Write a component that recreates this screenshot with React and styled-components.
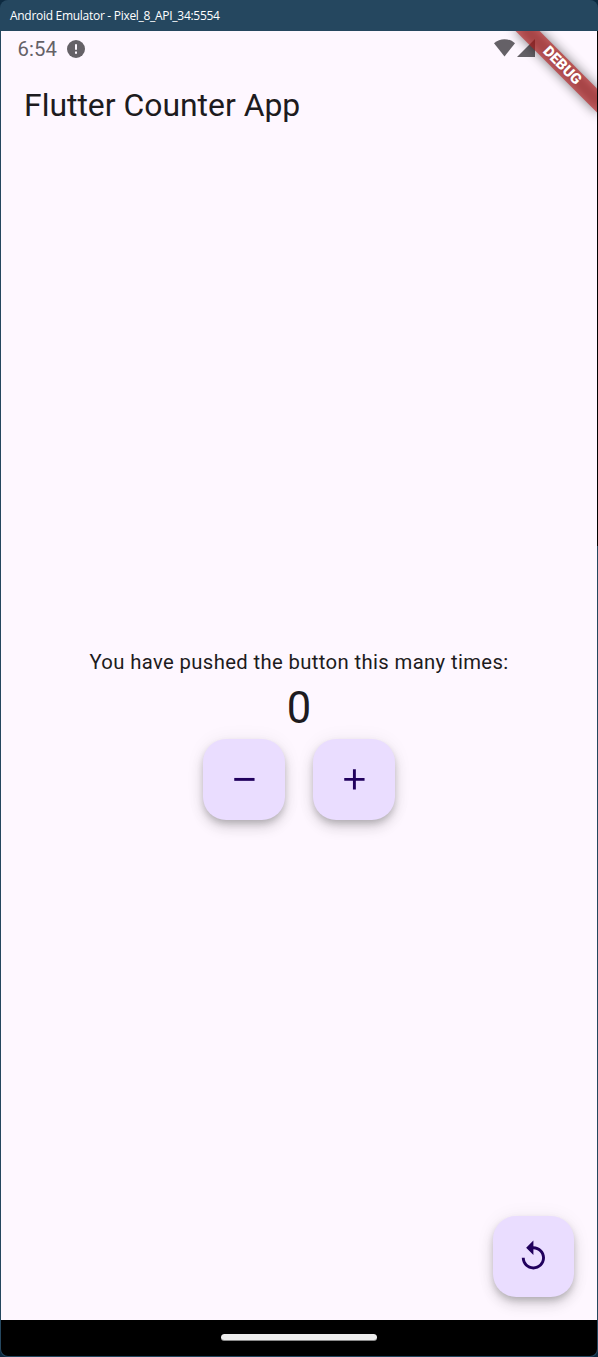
import React, { useState } from 'react';
import styled, { createGlobalStyle } from 'styled-components';
import { MdAdd, MdRemove, MdReplay } from 'react-icons/md';

const GlobalStyle = createGlobalStyle`
  * { box-sizing: border-box; }
  body { margin: 0; background: #0d2a40; font-family: Roboto, sans-serif; }
`;

const EmulatorWindow = styled.div`
  width: 598px;
  height: 1357px;
  display: flex;
  flex-direction: column;
  overflow: hidden;
  border-radius: 8px;
  background: #25475f;
`;

const TitleBar = styled.header`
  height: 31px;
  flex: none;
  padding-left: 10px;
  color: #fff;
  font: 12px/31px 'Open Sans', 'Noto Sans', sans-serif;
  letter-spacing: -0.29px;
  white-space: nowrap;
`;

const Device = styled.div`
  flex: 1;
  display: flex;
  flex-direction: column;
  margin: 0 0 1px;
  padding: 0 1px;
  min-height: 0;
  background: linear-gradient(#000 0 515px, #25475f 515px) right top / 1px 100% no-repeat;
`;

const Screen = styled.main`
  position: relative;
  flex: 1;
  display: flex;
  flex-direction: column;
  overflow: hidden;
  background: #fef7ff;
  color: #1d1b20;
`;

const StatusBar = styled.div`
  height: 35px;
  flex: none;
  display: flex;
  align-items: center;
  padding: 0 62px 0 16.6px;
  color: #656167;
`;

const Clock = styled.span`
  font-size: 20.3px;
  line-height: 35px;
  padding-top: 2px;
  letter-spacing: 0.1px;
  margin-right: 9.4px;
`;

const StatusIcons = styled.div`
  margin: 0 0 1px auto;
  display: flex;
  gap: 2.4px;
`;

const AppTitle = styled.h1`
  margin: 17px 0 0 23px;
  font-size: 31.9px;
  line-height: 44px;
  font-weight: 400;
`;

const Counter = styled.section`
  margin-top: 520px;
  display: flex;
  flex-direction: column;
  align-items: center;
`;

const Label = styled.p`
  margin: 0;
  font-size: 20.3px;
  line-height: 30px;
  letter-spacing: 0.36px;
`;

const Count = styled.output`
  font-size: 43.5px;
  line-height: 60px;
  padding-top: 2px;
`;

const ButtonRow = styled.div`
  display: flex;
  gap: 28.6px;
`;

const Fab = styled.button`
  width: 81.4px;
  height: 81.4px;
  margin-top: -0.4px;
  padding: 0;
  border: 0;
  border-radius: 23.2px;
  display: grid;
  place-items: center;
  background: #eaddff;
  color: #21005d;
  font-size: 34.8px;
  box-shadow: 0 4px 7px -1px rgba(0, 0, 0, 0.2), 0 8px 14px rgba(0, 0, 0, 0.12),
    0 1px 20px rgba(0, 0, 0, 0.06);
`;

const ResetArea = styled.div`
  margin: auto 23px 23px auto;
`;

const DebugCorner = styled.div`
  position: absolute;
  top: 0;
  right: 0;
  width: 120px;
  height: 120px;
  overflow: hidden;
`;

const Ribbon = styled.div`
  position: absolute;
  top: 26.2px;
  right: -23.1px;
  width: 116px;
  height: 17.4px;
  transform: rotate(45deg);
  color: #fff;
  font-size: 14.8px;
  font-weight: 900;
  line-height: 17.4px;
  text-align: center;

  &::before,
  &::after {
    content: '';
    position: absolute;
    inset: 0;
    z-index: -1;
  }
  &::before {
    background: rgba(0, 0, 0, 0.5);
    filter: blur(5.8px);
  }
  &::after {
    background: rgba(183, 28, 28, 0.627);
  }
`;

const NavBar = styled.footer`
  height: 36px;
  flex: none;
  display: flex;
  justify-content: center;
  padding-top: 14px;
  background: #000;
  border-radius: 0 0 7px 7px;
`;

const Handle = styled.div`
  width: 156px;
  height: 7px;
  border-radius: 3.5px;
  background: #ececec;
  border-bottom: 1px solid #8a8a8a;
`;

export default function App() {
  const [count, setCount] = useState(0);
  return (
    <EmulatorWindow>
      <GlobalStyle />
      <TitleBar>Android Emulator - Pixel_8_API_34:5554</TitleBar>
      <Device>
        <Screen>
          <StatusBar>
            <Clock>6:54</Clock>
            <svg width="18" height="18" viewBox="0 0 18 18">
              <circle cx="9" cy="9" r="9" fill="currentColor" />
              <path d="M9 4.2v5.6M9 11.6v2.2" stroke="#fef7ff" strokeWidth="2" />
            </svg>
            <StatusIcons>
              <svg width="21" height="18" viewBox="0 0 21 18">
                <path d="M0 4.2C6-1.2 15-1.2 21 4.2L10.5 17.5Z" fill="currentColor" />
              </svg>
              <svg width="18" height="18" viewBox="0 0 18 18">
                <path d="M18 0V18H0Z" fill="currentColor" />
              </svg>
            </StatusIcons>
          </StatusBar>
          <AppTitle>Flutter Counter App</AppTitle>
          <Counter>
            <Label>You have pushed the button this many times:</Label>
            <Count>{count}</Count>
            <ButtonRow>
              <Fab aria-label="Decrement" onClick={() => setCount(count - 1)}>
                <MdRemove />
              </Fab>
              <Fab aria-label="Increment" onClick={() => setCount(count + 1)}>
                <MdAdd />
              </Fab>
            </ButtonRow>
          </Counter>
          <ResetArea>
            <Fab aria-label="Reset" onClick={() => setCount(0)}>
              <MdReplay />
            </Fab>
          </ResetArea>
          <DebugCorner>
            <Ribbon>DEBUG</Ribbon>
          </DebugCorner>
        </Screen>
        <NavBar>
          <Handle />
        </NavBar>
      </Device>
    </EmulatorWindow>
  );
}
